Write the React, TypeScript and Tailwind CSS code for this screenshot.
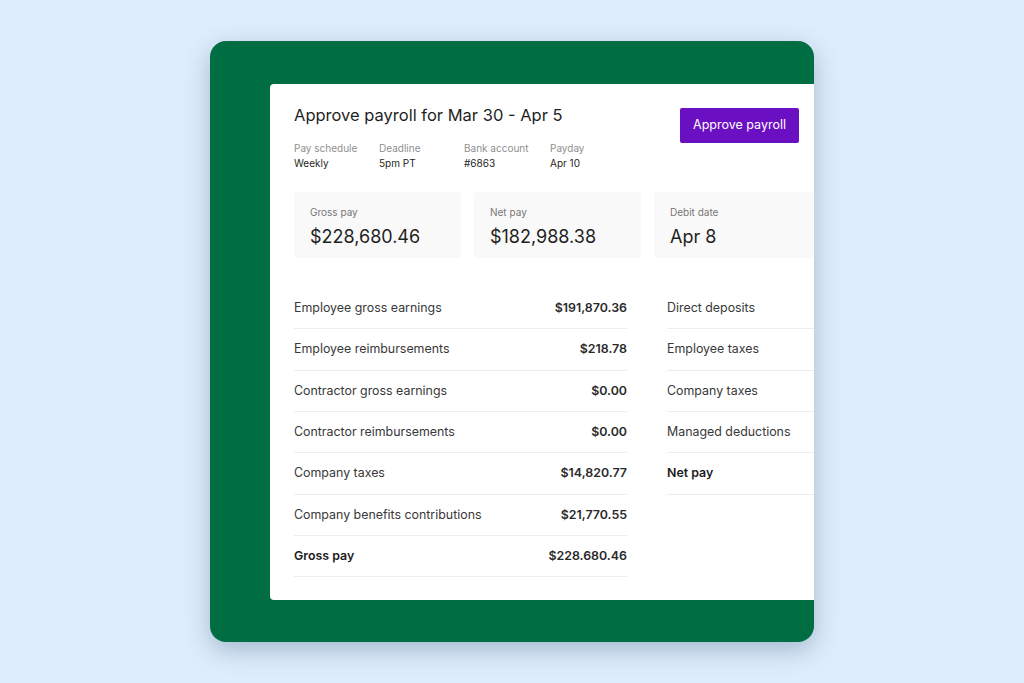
const meta = [
  { label: 'Pay schedule', value: 'Weekly', w: 'w-[85px]' },
  { label: 'Deadline', value: '5pm PT', w: 'w-[85px]' },
  { label: 'Bank account', value: '#6863', w: 'w-[86px]' },
  { label: 'Payday', value: 'Apr 10', w: 'w-[60px]' },
];

const stats = [
  { label: 'Gross pay', value: '$228,680.46' },
  { label: 'Net pay', value: '$182,988.38' },
  { label: 'Debit date', value: 'Apr 8' },
];

const left = [
  { label: 'Employee gross earnings', value: '$191,870.36' },
  { label: 'Employee reimbursements', value: '$218.78' },
  { label: 'Contractor gross earnings', value: '$0.00' },
  { label: 'Contractor reimbursements', value: '$0.00' },
  { label: 'Company taxes', value: '$14,820.77' },
  { label: 'Company benefits contributions', value: '$21,770.55' },
  { label: 'Gross pay', value: '$228.680.46', total: true },
];

const right = [
  { label: 'Direct deposits' },
  { label: 'Employee taxes' },
  { label: 'Company taxes' },
  { label: 'Managed deductions' },
  { label: 'Net pay', total: true },
];

function Row({ label, value, total }: { label: string; value?: string; total?: boolean }) {
  return (
    <div className="flex h-[41.33px] items-center justify-between border-b border-[#ededed] text-[12.4px]">
      <span className={total ? 'font-semibold text-[#1c1c1c]' : 'text-[#383838]'}>{label}</span>
      {value && <span className="font-semibold text-[#2a2a2a]">{value}</span>}
    </div>
  );
}

export default function App() {
  return (
    <div
      className="flex h-[683px] w-[1024px] items-start bg-[#deedfb] pl-[210px] pt-[41px]"
      style={{ fontFamily: 'Inter, "Noto Sans", sans-serif' }}
    >
      <div className="h-[601px] w-[604px] overflow-hidden rounded-[16px] bg-[#016d43] pl-[60px] pt-[43px] shadow-[0_8px_24px_rgba(60,90,130,0.35)]">
        <div className="h-[516px] w-[640px] rounded-l-[4px] bg-white pl-[24px] pt-[20px]">
          <div className="flex w-[505px] items-start justify-between">
            <div>
              <h1 className="text-[16.5px] leading-[22px] text-[#1f1f1f]">Approve payroll for Mar 30 - Apr 5</h1>
              <div className="mt-[15px] flex text-[10px] leading-[15px]">
                {meta.map((m) => (
                  <div key={m.label} className={m.w}>
                    <div className="text-[#8f8f8f]">{m.label}</div>
                    <div className="text-[#262626]">{m.value}</div>
                  </div>
                ))}
              </div>
            </div>
            <button className="mt-[4px] h-[35px] w-[119px] rounded-[2px] bg-[#6a10c2] text-[12.5px] text-white">
              Approve payroll
            </button>
          </div>

          <div className="mt-[21px] flex gap-[13px]">
            {stats.map((s) => (
              <div key={s.label} className="h-[66px] w-[167px] shrink-0 rounded-[3px] bg-[#f9f9f9] pl-[16px] pt-[13px]">
                <div className="text-[10px] leading-[14px] text-[#777]">{s.label}</div>
                <div className="mt-[7px] text-[18px] leading-[22px] text-[#1f1f1f]">{s.value}</div>
              </div>
            ))}
          </div>

          <div className="mt-[30px] flex gap-[40px]">
            <div className="w-[333px]">
              {left.map((r) => (
                <Row key={r.label} {...r} />
              ))}
            </div>
            <div className="w-[200px]">
              {right.map((r) => (
                <Row key={r.label} {...r} />
              ))}
            </div>
          </div>
        </div>
      </div>
    </div>
  );
}
